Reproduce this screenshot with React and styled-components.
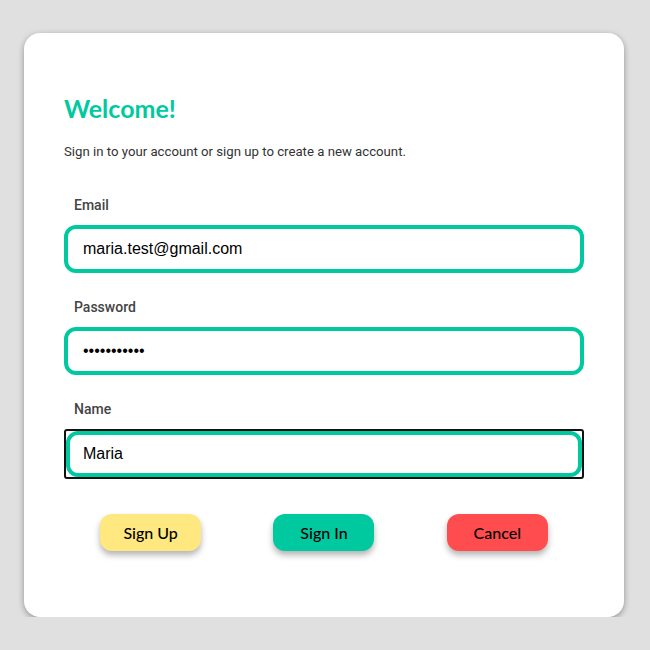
import React from 'react';
import styled, { createGlobalStyle } from 'styled-components';

const teal = '#00c9a0';

const GlobalStyle = createGlobalStyle`
  body {
    margin: 0;
    background: #e0e0e0;
    font-family: Roboto, "Liberation Sans", sans-serif;
  }
`;

const Page = styled.div`
  display: flex;
  padding: 33px 0 0 24px;
`;

const Card = styled.div`
  width: 600px;
  box-sizing: border-box;
  padding: 60px 40px 66px;
  background: #fff;
  border-radius: 16px;
  box-shadow: 0 2px 6px rgba(0, 0, 0, 0.35);
`;

const Title = styled.h1`
  margin: 0 0 21px;
  font-family: Lato, "Open Sans", sans-serif;
  font-size: 25px;
  line-height: 30px;
  font-weight: 700;
  color: ${teal};
`;

const Subtitle = styled.p`
  margin: 0 0 36px;
  font-size: 13.2px;
  line-height: 16px;
  color: #333;
`;

const Field = styled.div`
  display: flex;
  flex-direction: column;
  gap: 11px;
  margin-bottom: ${(p) => p.$gap || '25px'};
`;

const Label = styled.label`
  padding-left: 10px;
  font-size: 14px;
  line-height: 18px;
  font-weight: 500;
  color: #444;
`;

const Input = styled.input`
  box-sizing: border-box;
  width: 100%;
  height: ${(p) => p.$h || '48px'};
  padding: 0 ${(p) => p.$pad || '15px'};
  border: 4px solid ${teal};
  border-radius: 12px;
  outline: none;
  font-family: "Liberation Sans", Arial, sans-serif;
  font-size: 16px;
  color: #000;
  background: #fff;
`;

const FocusRing = styled.div`
  border: 2px solid #111;
  border-radius: 3px;
  display: flex;
`;

const Actions = styled.div`
  display: flex;
  justify-content: space-around;
  margin-top: 35px;
`;

const Button = styled.button`
  width: 101px;
  height: 37px;
  border: none;
  border-radius: 12px;
  background: ${(p) => p.$bg};
  box-shadow: 0 4px 6px rgba(0, 0, 0, 0.3);
  font-family: Lato, "Open Sans", sans-serif;
  font-size: 16px;
  font-weight: 500;
  color: #000;
  cursor: pointer;
`;

export default function App() {
  return (
    <>
      <GlobalStyle />
      <Page>
        <Card>
          <Title>Welcome!</Title>
          <Subtitle>Sign in to your account or sign up to create a new account.</Subtitle>
          <Field>
            <Label>Email</Label>
            <Input type="email" defaultValue="maria.test@gmail.com" />
          </Field>
          <Field>
            <Label>Password</Label>
            <Input type="password" defaultValue="12345678901" />
          </Field>
          <Field $gap="0">
            <Label>Name</Label>
            <FocusRing>
              <Input $h="46px" $pad="13px" defaultValue="Maria" autoFocus />
            </FocusRing>
          </Field>
          <Actions>
            <Button $bg="#ffe880">Sign Up</Button>
            <Button $bg={teal}>Sign In</Button>
            <Button $bg="#ff4d4f">Cancel</Button>
          </Actions>
        </Card>
      </Page>
    </>
  );
}
